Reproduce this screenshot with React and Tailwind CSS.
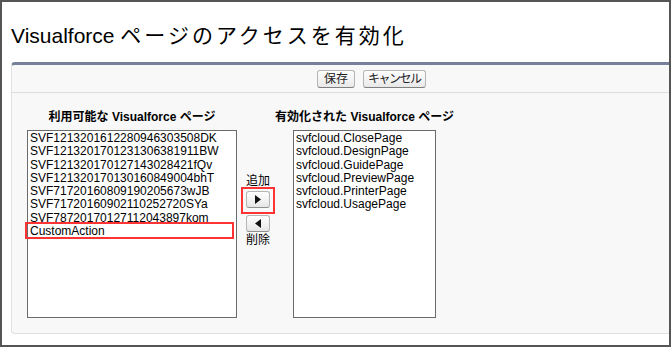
import React from 'react'

const available = [
  'SVF1213201612280946303508DK',
  'SVF1213201701231306381911BW',
  'SVF121320170127143028421fQv',
  'SVF121320170130160849004bhT',
  'SVF71720160809190205673wJB',
  'SVF71720160902110252720SYa',
  'SVF78720170127112043897kom',
]

const enabled = [
  'svfcloud.ClosePage',
  'svfcloud.DesignPage',
  'svfcloud.GuidePage',
  'svfcloud.PreviewPage',
  'svfcloud.PrinterPage',
  'svfcloud.UsagePage',
]

const font = { fontFamily: '"Liberation Sans", "Noto Sans CJK JP", sans-serif' }

function MoveButton({ dir }) {
  return (
    <div className="w-[24px] h-[17px] flex items-center justify-center rounded-[3px] border border-[#b5b5b5] border-b-[#8f8f8f] bg-gradient-to-b from-white to-[#e6e6e6]">
      <svg width="6" height="9" viewBox="0 0 6 9">
        {dir === 'right' ? <path d="M0 0 L6 4.5 L0 9 Z" fill="#111" /> : <path d="M6 0 L0 4.5 L6 9 Z" fill="#111" />}
      </svg>
    </div>
  )
}

export default function App() {
  return (
    <div className="w-[671px] h-[347px] border-2 border-[#555] bg-white text-black overflow-hidden" style={font}>
      <div className="h-[60px] pt-[21px] pl-[9px] text-[21px] leading-[25px] whitespace-nowrap">
        Visualforce <span className="tracking-[3px]">ページのアクセスを有効化</span>
      </div>

      <div className="ml-[9px] h-[272px] bg-[#f8f8f8] border-t-[3px] border-t-[#76809a] border-l border-b border-[#e0e0e0] rounded-tl-[4px] rounded-bl-[4px]">
        <div className="h-[28px] border-b border-[#dddddd] flex items-center gap-[8px] pl-[305px]">
          <button className="h-[18px] px-[6px] rounded-[3px] border border-[#b5b5b5] border-b-[#7f7f7f] bg-gradient-to-b from-white to-[#e8e8e8] text-[12px] leading-[16px] text-[#222]">
            保存
          </button>
          <button className="h-[18px] px-[4px] rounded-[3px] border border-[#b5b5b5] border-b-[#7f7f7f] bg-gradient-to-b from-white to-[#e8e8e8] text-[12px] leading-[16px] text-[#222] tracking-[-1.5px]">
            キャンセル
          </button>
        </div>

        <div className="flex items-start pt-[16px] pl-[15px]">
          <div className="w-[210px] flex flex-col items-center">
            <div className="h-[16px] mb-[5px] text-[12px] leading-[16px] font-bold whitespace-nowrap">利用可能な Visualforce ページ</div>
            <div className="w-[210px] h-[188px] bg-white border border-[#6b6b6b] pt-[1px] px-[2px] text-[12px] leading-[13.3px]">
              {available.map(t => (
                <div key={t} className="whitespace-nowrap">{t}</div>
              ))}
              <div className="relative whitespace-nowrap">
                CustomAction
                <span className="absolute left-[-5px] top-[-3px] w-[209px] h-[17px] border-2 border-[#ff3333]" />
              </div>
            </div>
          </div>

          <div className="ml-[9px] mt-[64px] w-[25px] flex flex-col items-start text-[12px] leading-[16px]">
            <div className="h-[16px] whitespace-nowrap">追加</div>
            <div className="relative mt-[2px]">
              <MoveButton dir="right" />
              <span className="absolute left-[-5px] top-[-4px] w-[34px] h-[27px] border-2 border-[#ff3333]" />
            </div>
            <div className="mt-[7px]">
              <MoveButton dir="left" />
            </div>
            <div className="h-[16px] whitespace-nowrap">削除</div>
          </div>

          <div className="ml-[22px] w-[143px] flex flex-col items-center">
            <div className="h-[16px] mb-[5px] text-[12px] leading-[16px] font-bold whitespace-nowrap">有効化された Visualforce ページ</div>
            <div className="w-[143px] h-[188px] bg-white border border-[#6b6b6b] pt-[1px] px-[2px] text-[12px] leading-[13.3px]">
              {enabled.map(t => (
                <div key={t} className="whitespace-nowrap">{t}</div>
              ))}
            </div>
          </div>
        </div>
      </div>
    </div>
  )
}
